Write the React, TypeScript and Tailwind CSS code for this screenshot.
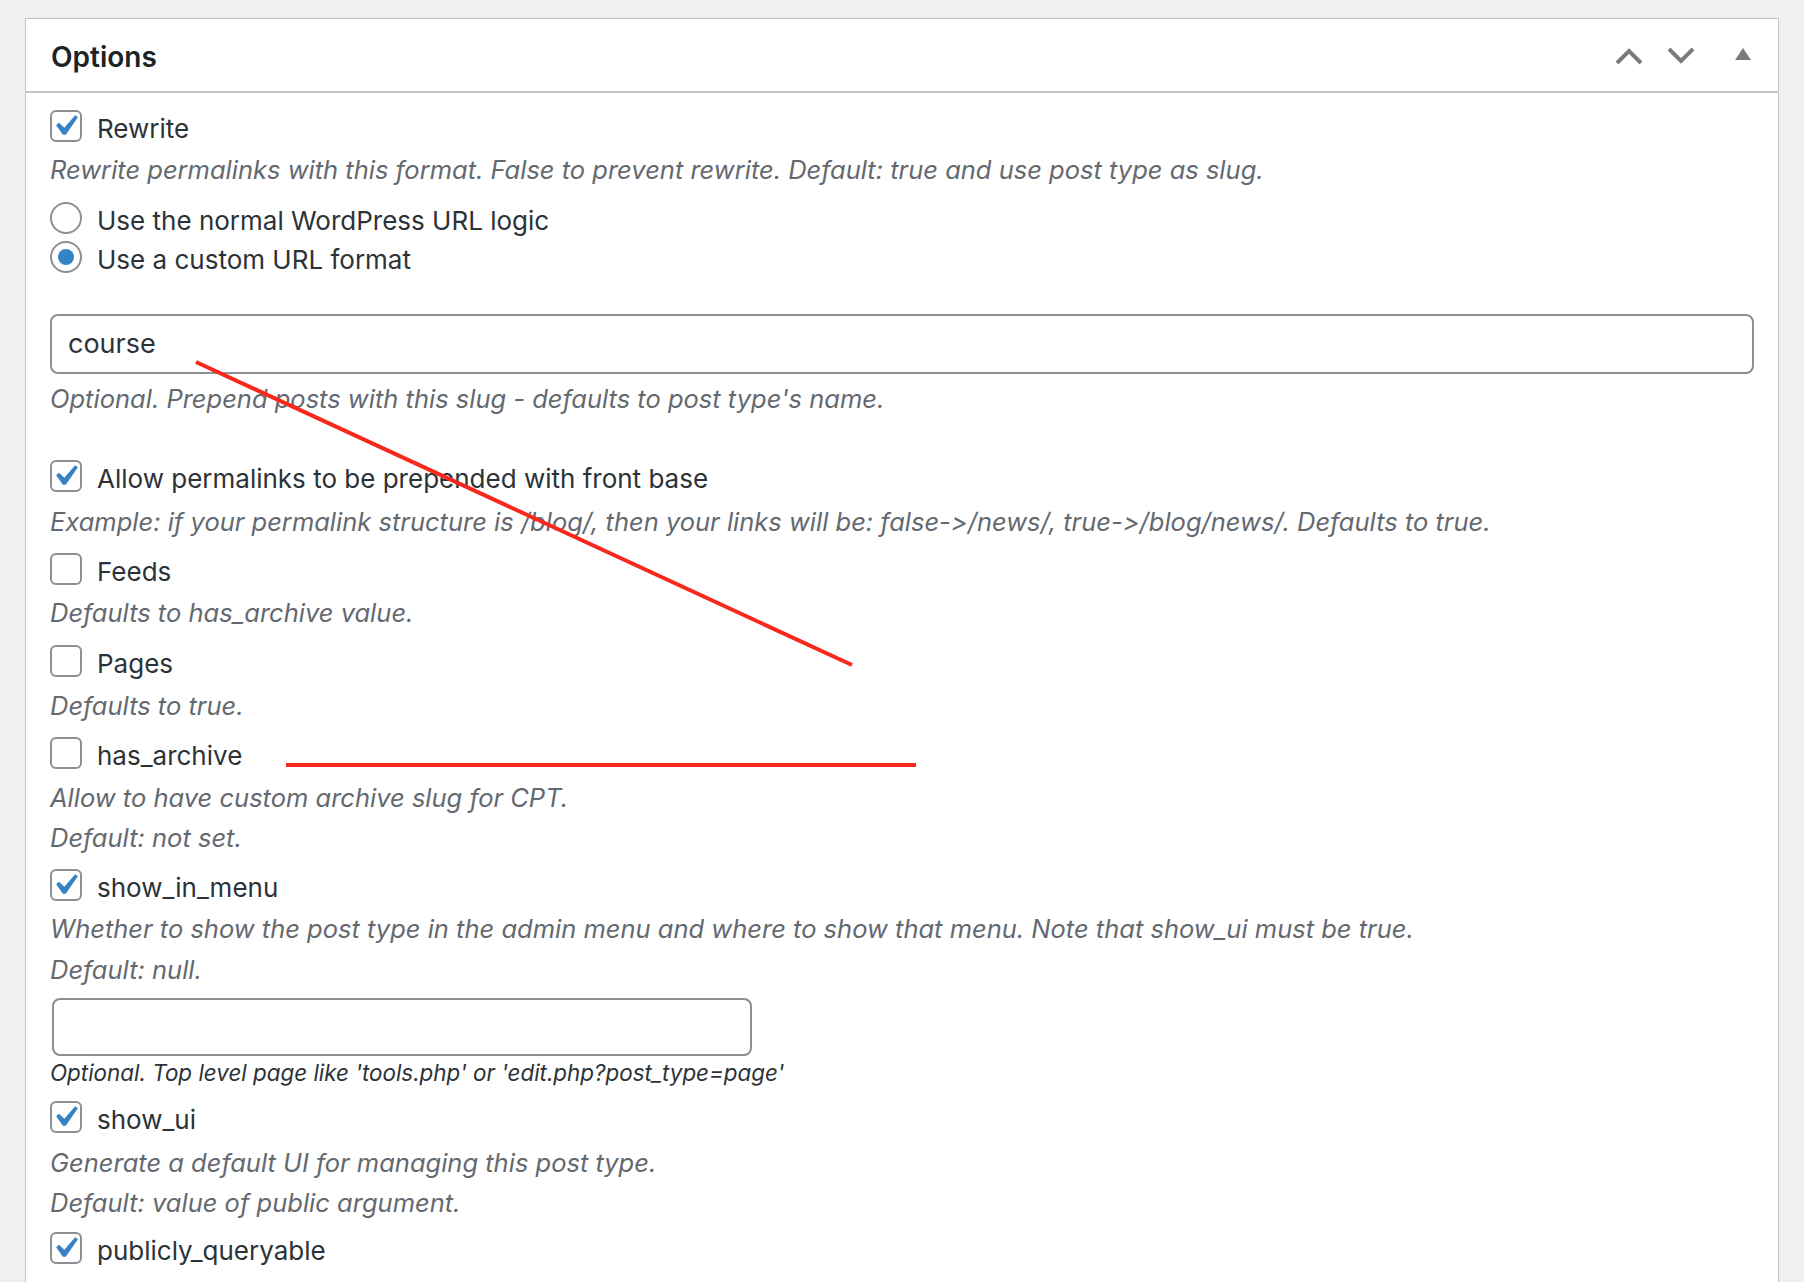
import React from 'react';

const FONT = { fontFamily: 'Inter, "Noto Sans", sans-serif' };

const Check = ({ checked }: { checked: boolean }) => (
  <span className="relative inline-block w-[32px] h-[32px] shrink-0 rounded-[6px] border-2 border-[#8c8f94] bg-white">
    {checked && (
      <svg viewBox="0 0 20 20" className="absolute -left-[8px] -top-[7px] w-[42px] h-[42px]">
        <path d="M14.83 4.89l1.34.94-5.81 8.38H9.02L5.78 9.67l1.34-1.25 2.57 2.4z" fill="#3582c4" />
      </svg>
    )}
  </span>
);

const Radio = ({ checked }: { checked: boolean }) => (
  <span className="inline-flex items-center justify-center w-[32px] h-[32px] shrink-0 rounded-full border-2 border-[#8c8f94] bg-white">
    {checked && <span className="block w-[16px] h-[16px] rounded-full bg-[#3582c4]" />}
  </span>
);

const CheckRow = ({ label, checked, className = '' }: { label: string; checked: boolean; className?: string }) => (
  <div className={`flex items-center gap-[15px] h-[40px] ${className}`}>
    <Check checked={checked} />
    <span className="text-[26px] text-[#2c3338] pt-[5px]">{label}</span>
  </div>
);

const Desc = ({ children, className = '' }: { children: React.ReactNode; className?: string }) => (
  <p className={`h-[40px] leading-[40px] text-[25.5px] italic text-[#646970] whitespace-nowrap ${className}`}>{children}</p>
);

export default function App() {
  return (
    <div
      className="min-h-[1282px] bg-[#f0f0f1] pt-[18px] pl-[25px] pr-[25px] overflow-hidden [font-feature-settings:'calt'_0,'liga'_0]"
      style={FONT}
    >
      <div className="relative bg-white border border-[#c3c4c7] border-b-0 h-[1300px]">
        {/* Header */}
        <div className="flex items-center justify-between h-[74px] border-b-2 border-[#c3c4c7] pl-[25px] pr-[26px]">
          <h2 className="text-[28px] font-semibold text-[#1d2327] pt-[3px]">Options</h2>
          <div className="flex items-center gap-[24px]">
            <svg width="28" height="18" viewBox="0 0 28 18" className="mt-[2px]">
              <polyline points="2,16 14,4 26,16" fill="none" stroke="#787c82" strokeWidth="4" />
            </svg>
            <svg width="28" height="18" viewBox="0 0 28 18" className="mt-[2px]">
              <polyline points="2,2 14,14 26,2" fill="none" stroke="#787c82" strokeWidth="4" />
            </svg>
            <svg width="18" height="14" viewBox="0 0 18 14" className="ml-[15px] mt-[-2px]">
              <polygon points="1,13 9,1 17,13" fill="#787c82" />
            </svg>
          </div>
        </div>

        {/* Body */}
        <div className="px-[24px] pt-[12px]">
          <CheckRow label="Rewrite" checked className="pt-[1px]" />
          <Desc className="mt-[5px]">Rewrite permalinks with this format. False to prevent rewrite. Default: true and use post type as slug.</Desc>

          <div className="flex items-center gap-[15px] h-[36px] mt-[10px]">
            <Radio checked={false} />
            <span className="text-[26px] text-[#2c3338] pt-[5px]">Use the normal WordPress URL logic</span>
          </div>
          <div className="flex items-center gap-[15px] h-[36px] mt-[3px]">
            <Radio checked />
            <span className="text-[26px] text-[#2c3338] pt-[5px]">Use a custom URL format</span>
          </div>

          <div className="mt-[39px] h-[60px] flex items-center border-2 border-[#8c8f94] rounded-[8px] px-[16px]">
            <span className="text-[27px] text-[#2c3338]">course</span>
          </div>
          <Desc className="mt-[5px]">Optional. Prepend posts with this slug - defaults to post type's name.</Desc>

          <CheckRow label="Allow permalinks to be prepended with front base" checked className="mt-[37px]" />
          <Desc className="mt-[6px]">Example: if your permalink structure is /blog/, then your links will be: false-&gt;/news/, true-&gt;/blog/news/. Defaults to true.</Desc>

          <CheckRow label="Feeds" checked={false} className="mt-[7px]" />
          <Desc className="mt-[4px]">Defaults to has_archive value.</Desc>

          <CheckRow label="Pages" checked={false} className="mt-[8px]" />
          <Desc className="mt-[5px]">Defaults to true.</Desc>

          <CheckRow label="has_archive" checked={false} className="mt-[7px]" />
          <Desc className="mt-[5px]">Allow to have custom archive slug for CPT.</Desc>
          <Desc>Default: not set.</Desc>

          <CheckRow label="show_in_menu" checked className="mt-[7px]" />
          <Desc className="mt-[4px]">Whether to show the post type in the admin menu and where to show that menu. Note that show_ui must be true.</Desc>
          <Desc className="mt-[1px]">Default: null.</Desc>

          <div className="mt-[8px] ml-[2px] w-[700px] h-[58px] border-2 border-[#8c8f94] rounded-[8px]" />
          <p className="mt-[2px] h-[30px] leading-[30px] text-[22.4px] italic text-[#2c3338] whitespace-nowrap">Optional. Top level page like 'tools.php' or 'edit.php?post_type=page'</p>

          <CheckRow label="show_ui" checked className="mt-[9px]" />
          <Desc className="mt-[6px]">Generate a default UI for managing this post type.</Desc>
          <Desc>Default: value of public argument.</Desc>

          <CheckRow label="publicly_queryable" checked className="mt-[5px]" />
        </div>

        {/* red annotation strokes */}
        <svg className="absolute left-0 top-0 pointer-events-none" width="1757" height="1282">
          <line x1="170" y1="343" x2="826" y2="646" stroke="#f8281d" strokeWidth="4" />
          <line x1="260" y1="746" x2="890" y2="746" stroke="#f8281d" strokeWidth="4" />
        </svg>
      </div>
    </div>
  );
}
